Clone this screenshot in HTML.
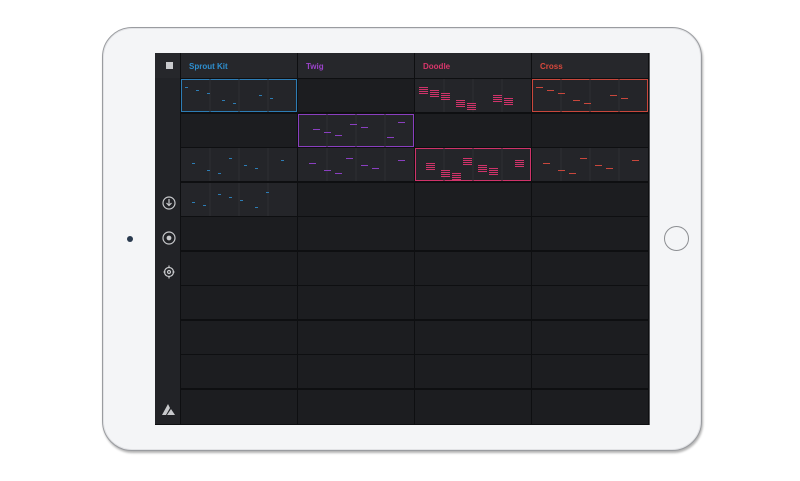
<!DOCTYPE html>
<html><head><meta charset="utf-8"><style>
*{margin:0;padding:0;box-sizing:border-box}
body{width:800px;height:481px;background:#fff;position:relative;overflow:hidden;font-family:"Liberation Sans",sans-serif}
.dev{position:absolute;left:102px;top:27px;width:600px;height:424px;border-radius:30px;background:#f4f5f7;border:1.5px solid #9a9ca0;box-shadow:inset 0 0 0 1px #e2e3e6,1px 2px 2px rgba(0,0,0,.3)}
.cam{position:absolute;left:127px;top:236px;width:6px;height:6px;border-radius:50%;background:#2a3a4f}
.home{position:absolute;left:664px;top:226px;width:25px;height:25px;border-radius:50%;border:1px solid #8c8e92;background:#f4f5f7}
.scr{position:absolute;left:155px;top:53px;width:495px;height:372px;background:#0e0f11;border-right:1px solid #5a5b5e}
.side{position:absolute;left:0;top:0;width:25px;height:371px;background:#222327}
.sq{position:absolute;left:166px;top:62px;width:7px;height:7px;background:#c9cacd}
.hdr{position:absolute;top:0;height:25px;background:#26272b;color:#fff;font-size:8px;font-weight:bold;padding:9px 0 0 8px}
.c{position:absolute;height:33px;background:#1c1d20}
.f{background:#242529}
svg{position:absolute}
</style></head><body>
<div class="dev"></div>
<div class="cam"></div>
<div class="home"></div>
<div class="scr">
<div class="side"></div>
<div class="hdr" style="left:0;width:25px;padding:0"></div>
<div class="hdr" style="left:26px;width:116px;color:#2e8fcf">Sprout Kit</div>
<div class="hdr" style="left:143px;width:116px;color:#9a43c9">Twig</div>
<div class="hdr" style="left:260px;width:116px;color:#d8366b">Doodle</div>
<div class="hdr" style="left:377px;width:116px;color:#d9483c">Cross</div>
<div id="g"></div>
</div>
<div class="sq"></div>
<svg style="left:161px;top:195px" width="16" height="92" viewBox="0 0 16 92" fill="none" stroke="#c8c9cc" stroke-width="1.2">
<circle cx="8" cy="8" r="6"/><path d="M8 4v6M5.5 8l2.5 2.5 2.5-2.5"/>
<circle cx="8" cy="43" r="6"/><circle cx="8" cy="43" r="1.8" fill="#c8c9cc"/>
<circle cx="8" cy="77" r="4.5"/><circle cx="8" cy="77" r="1.5"/><path d="M8 70.5v2M8 81.5v2M2.5 77h2M11.5 77h2"/>
</svg>
<svg style="left:162px;top:403px" width="14" height="12" viewBox="0 0 14 12"><path d="M0 12L6 1l2 4-4 7zM5 12l4-6 4 6zM9 10h3" fill="#c8c9cc"/></svg>
<script>
var g=document.getElementById('g'),h='';
var cols=[26,143,260,377],tops=[26,61,95,130,164,199,233,268,302,337];
var col=['#2d7db5','#8a3fc0','#d0336a','#c9473c'];
var sel={'0,0':1,'1,1':1,'2,2':1,'0,3':1};
var hasf={'0,0':1,'0,2':1,'0,3':1,'1,1':1,'2,0':1,'2,1':1,'2,2':1,'2,3':1,'3,0':1};
for(var r=0;r<10;r++)for(var c=0;c<4;c++){
 var k=r+','+c,f=hasf[k];
 var st='left:'+cols[c]+'px;top:'+tops[r]+'px;width:116px;'+(r==9?'height:34px;':'');
 if(sel[k])st+='outline:1px solid '+col[c]+';outline-offset:-1px;';
 h+='<div class="c'+(f?' f':'')+'" style="'+st+'">';
 if(f){
  h+='<svg width="116" height="33">';
  for(var i=1;i<4;i++)h+='<line x1="'+(i*29)+'" y1="0" x2="'+(i*29)+'" y2="33" stroke="#2e2f33"/>';
  var n=c==2?7:7;
  for(var j=0;j<n;j++){var x=4+((j*37+r*11)%100),y=8+((j*13+r*7)%18);
   if(c==2){for(var q=0;q<4;q++)h+='<rect x="'+x+'" y="'+(y+q*2)+'" width="9" height="1" fill="'+col[c]+'"/>';}
   else h+='<rect x="'+x+'" y="'+y+'" width="'+(c==0?3:7)+'" height="1" fill="'+col[c]+'"/>';}
  h+='</svg>';
 }
 h+='</div>';
}
g.innerHTML=h;
</script>
</body></html>
